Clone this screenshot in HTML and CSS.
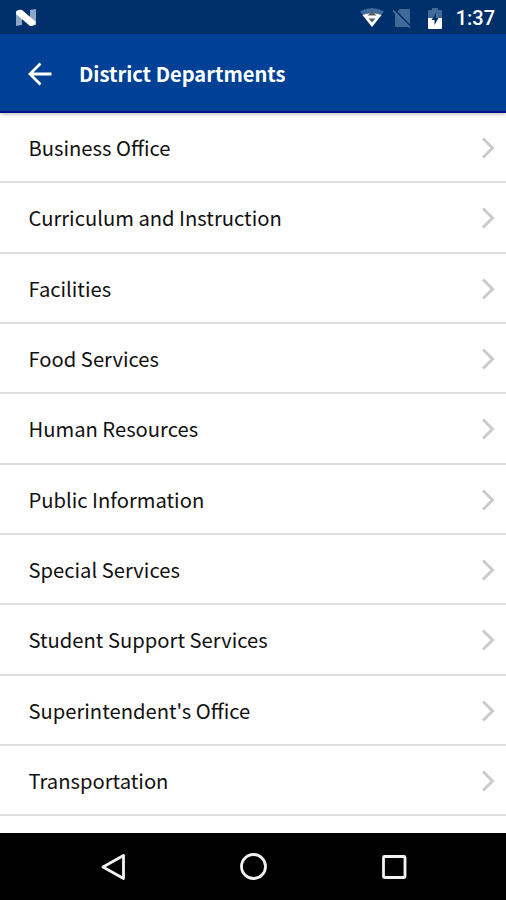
FILE: index.html
```html
<!DOCTYPE html>
<html lang="en">
<head>
    <meta charset="UTF-8" />
    <meta name="viewport" content="width=device-width, initial-scale=1.0"/>
    <title>District Departments</title>
    <link rel="stylesheet" href="styles.css">
</head>
<body>
    <svg class="sprite" width="0" height="0">
        <symbol id="chevron" viewBox="0 0 14 22">
            <path d="M2 1.5L11.5 11L2 20.5" fill="none" stroke="#cbcbcb" stroke-width="3"/>
        </symbol>
    </svg>

    <div class="screen">
        <div class="status-bar">
            <svg class="icon-n" width="22" height="18" viewBox="0 0 22 18">
                <path d="M1 2L7 1V16L1 17Z M15 1L21 0V16L15 17Z" fill="#8fa6c4"/>
                <path d="M1 3Q3 0 7 1L21 13Q20 17 15 17L1 5Z" fill="#fff"/>
            </svg>
            <div class="status-icons">
                <svg class="icon-wifi" width="24" height="20" viewBox="0 0 24 20">
                    <path d="M0 3.5Q12 -3.5 24 3.5L12 19Z" fill="#406a98"/>
                    <path d="M2.5 7Q12 3.5 21.5 7L12 19Z" fill="#fff"/>
                    <path d="M7.5 7.5L12 3L16.5 7.5Z M8.5 10.5H15.5L12 14.5Z" fill="#596269"/>
                </svg>
                <svg class="icon-sim" width="20" height="20" viewBox="0 0 20 20">
                    <path d="M7 1H16Q17 1 17 2V18Q17 19 16 19H3Q2 19 2 18V6Z" fill="#416a98"/>
                    <path d="M1 2L18 19.5" stroke="#00306b" stroke-width="3"/>
                    <path d="M0 2.5L17 19.5" stroke="#5379a4" stroke-width="1.5"/>
                </svg>
                <svg class="icon-battery" width="14" height="21" viewBox="0 0 14 21">
                    <path d="M4 0H10V2H13Q14 2 14 3V11H0V3Q0 2 1 2H4Z" fill="#406a98"/>
                    <path d="M0 10H14V20Q14 21 13 21H1Q0 21 0 20Z" fill="#fff"/>
                    <path d="M8 5L3.5 12H6.5V17L10.5 10H8Z" fill="#00306b"/>
                </svg>
                <span class="clock">1:37</span>
            </div>
        </div>

        <div class="header">
            <svg class="back" width="24" height="24" viewBox="0 0 24 24">
                <path d="M12.5 1.5L2 12L12.5 22.5M2 12H23.5" fill="none" stroke="#fff" stroke-width="2.8"/>
            </svg>
            <h1>District Departments</h1>
        </div>

        <ul class="department-list">
            <li><span>Business Office</span><svg class="chevron"><use href="#chevron"/></svg></li>
            <li><span>Curriculum and Instruction</span><svg class="chevron"><use href="#chevron"/></svg></li>
            <li><span>Facilities</span><svg class="chevron"><use href="#chevron"/></svg></li>
            <li><span>Food Services</span><svg class="chevron"><use href="#chevron"/></svg></li>
            <li><span>Human Resources</span><svg class="chevron"><use href="#chevron"/></svg></li>
            <li><span>Public Information</span><svg class="chevron"><use href="#chevron"/></svg></li>
            <li><span>Special Services</span><svg class="chevron"><use href="#chevron"/></svg></li>
            <li><span>Student Support Services</span><svg class="chevron"><use href="#chevron"/></svg></li>
            <li><span>Superintendent's Office</span><svg class="chevron"><use href="#chevron"/></svg></li>
            <li><span>Transportation</span><svg class="chevron"><use href="#chevron"/></svg></li>
        </ul>

        <div class="nav-bar">
            <svg width="28" height="28" viewBox="0 0 28 28">
                <path d="M23.5 2.5V25.5L3 14Z" fill="none" stroke="#f2f2f2" stroke-width="2.8" stroke-linejoin="round"/>
            </svg>
            <svg width="28" height="28" viewBox="0 0 28 28">
                <circle cx="13.5" cy="13.5" r="12" fill="none" stroke="#f2f2f2" stroke-width="2.8"/>
            </svg>
            <svg width="28" height="28" viewBox="0 0 28 28">
                <rect x="3.5" y="3.5" width="21.5" height="21" rx="1" fill="none" stroke="#f2f2f2" stroke-width="2.8"/>
            </svg>
        </div>
    </div>
</body>
</html>
```

FILE: styles.css
```css
* {
    margin: 0;
    padding: 0;
    box-sizing: border-box;
}

body {
    font-family: 'Noto Sans CJK SC', 'Noto Sans', sans-serif;
    background: #fff;
    color: #111;
}

.sprite {
    display: block;
}

.screen {
    height: 900px;
    display: flex;
    flex-direction: column;
    overflow: hidden;
}

.status-bar {
    height: 34px;
    flex-shrink: 0;
    background: #00306b;
    display: flex;
    align-items: center;
    justify-content: space-between;
    padding: 2px 11px 0 15px;
}

.status-icons {
    display: flex;
    align-items: center;
}

.icon-wifi {
    margin-right: 9px;
}

.icon-sim {
    margin-right: 15px;
}

.icon-battery {
    margin-right: 14px;
}

.clock {
    font-family: Roboto, sans-serif;
    font-size: 20px;
    font-weight: 500;
    line-height: 34px;
    color: #fff;
}

.header {
    height: 79px;
    flex-shrink: 0;
    background: #004095;
    border-bottom: 2px solid #00108a;
    box-shadow: 0 1px 4px rgba(0, 0, 0, 0.3);
    display: flex;
    align-items: center;
    padding: 2px 0 0 28px;
}

.header h1 {
    color: #fff;
    font-size: 20.1px;
    font-weight: 700;
    line-height: 30px;
    margin-left: 27px;
}

.department-list {
    list-style: none;
    flex: 1;
}

.department-list li {
    height: 70.33px;
    border-bottom: 2px solid #dedede;
    display: flex;
    align-items: center;
    justify-content: space-between;
    padding: 1.6px 11px 0 28.5px;
    font-size: 20.2px;
    line-height: 30px;
}

.chevron {
    width: 14px;
    height: 22px;
}

.nav-bar {
    height: 67px;
    flex-shrink: 0;
    background: #000;
    display: flex;
    align-items: center;
    justify-content: space-between;
    padding: 0 98px 0 100px;
}
```
